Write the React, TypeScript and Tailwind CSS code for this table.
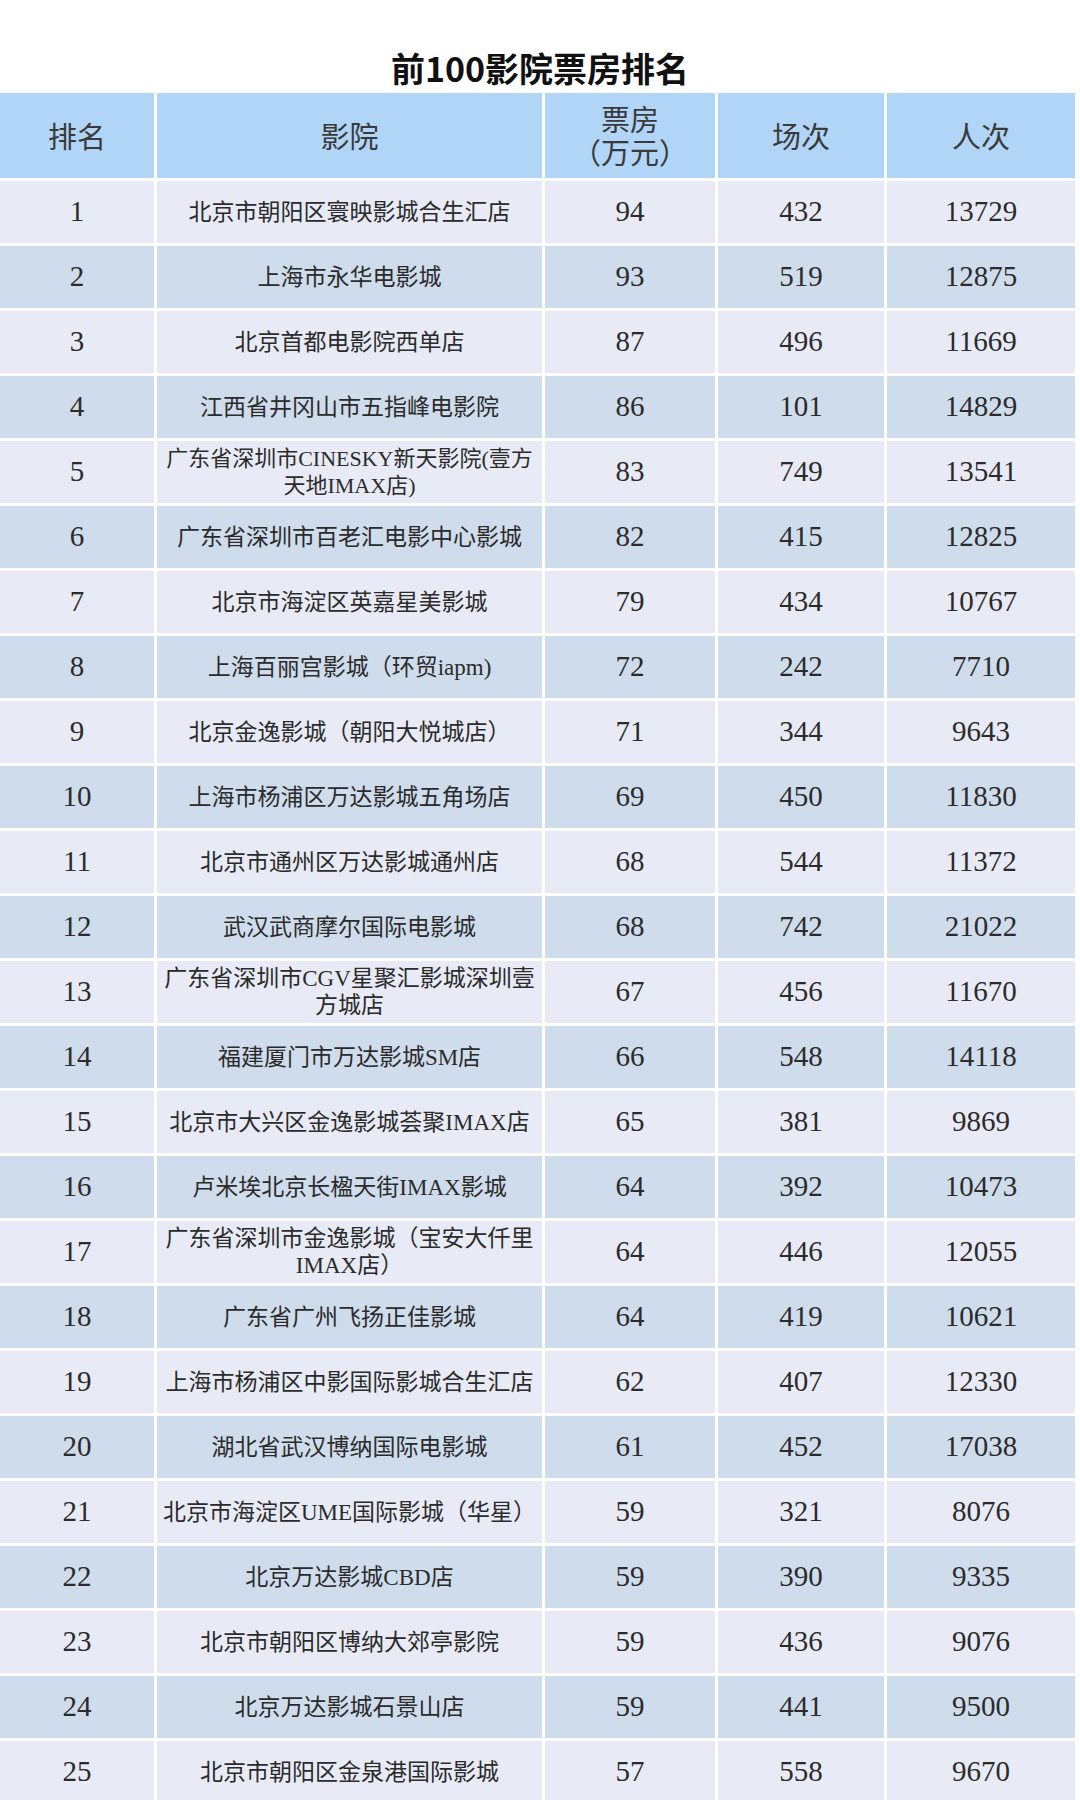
import React from "react";

type Row = {
  rank: number;
  name: React.ReactNode;
  box: number;
  shows: number;
  people: number;
};

const rows: Row[] = [
  { rank: 1, name: "北京市朝阳区寰映影城合生汇店", box: 94, shows: 432, people: 13729 },
  { rank: 2, name: "上海市永华电影城", box: 93, shows: 519, people: 12875 },
  { rank: 3, name: "北京首都电影院西单店", box: 87, shows: 496, people: 11669 },
  { rank: 4, name: "江西省井冈山市五指峰电影院", box: 86, shows: 101, people: 14829 },
  {
    rank: 5,
    name: (
      <>
        广东省深圳市CINESKY新天影院(壹方
        <br />
        天地IMAX店)
      </>
    ),
    box: 83,
    shows: 749,
    people: 13541,
  },
  { rank: 6, name: "广东省深圳市百老汇电影中心影城", box: 82, shows: 415, people: 12825 },
  { rank: 7, name: "北京市海淀区英嘉星美影城", box: 79, shows: 434, people: 10767 },
  { rank: 8, name: "上海百丽宫影城（环贸iapm)", box: 72, shows: 242, people: 7710 },
  { rank: 9, name: "北京金逸影城（朝阳大悦城店）", box: 71, shows: 344, people: 9643 },
  { rank: 10, name: "上海市杨浦区万达影城五角场店", box: 69, shows: 450, people: 11830 },
  { rank: 11, name: "北京市通州区万达影城通州店", box: 68, shows: 544, people: 11372 },
  { rank: 12, name: "武汉武商摩尔国际电影城", box: 68, shows: 742, people: 21022 },
  {
    rank: 13,
    name: (
      <>
        广东省深圳市CGV星聚汇影城深圳壹
        <br />
        方城店
      </>
    ),
    box: 67,
    shows: 456,
    people: 11670,
  },
  { rank: 14, name: "福建厦门市万达影城SM店", box: 66, shows: 548, people: 14118 },
  { rank: 15, name: "北京市大兴区金逸影城荟聚IMAX店", box: 65, shows: 381, people: 9869 },
  { rank: 16, name: "卢米埃北京长楹天街IMAX影城", box: 64, shows: 392, people: 10473 },
  {
    rank: 17,
    name: (
      <>
        广东省深圳市金逸影城（宝安大仟里
        <br />
        IMAX店）
      </>
    ),
    box: 64,
    shows: 446,
    people: 12055,
  },
  { rank: 18, name: "广东省广州飞扬正佳影城", box: 64, shows: 419, people: 10621 },
  { rank: 19, name: "上海市杨浦区中影国际影城合生汇店", box: 62, shows: 407, people: 12330 },
  { rank: 20, name: "湖北省武汉博纳国际电影城", box: 61, shows: 452, people: 17038 },
  { rank: 21, name: "北京市海淀区UME国际影城（华星）", box: 59, shows: 321, people: 8076 },
  { rank: 22, name: "北京万达影城CBD店", box: 59, shows: 390, people: 9335 },
  { rank: 23, name: "北京市朝阳区博纳大郊亭影院", box: 59, shows: 436, people: 9076 },
  { rank: 24, name: "北京万达影城石景山店", box: 59, shows: 441, people: 9500 },
  { rank: 25, name: "北京市朝阳区金泉港国际影城", box: 57, shows: 558, people: 9670 },
];

const serif = "font-['Liberation_Serif','Noto_Sans_CJK_SC',serif]";

function HeadCell({ children }: { children: React.ReactNode }) {
  return (
    <div
      className={`flex h-[85px] items-center justify-center bg-[#b1d5f6] pt-[5px] text-center text-[29px] leading-[33px] text-[#3a3a3a] ${serif}`}
    >
      {children}
    </div>
  );
}

function Cell({
  children,
  even,
  small,
}: {
  children: React.ReactNode;
  even: boolean;
  small?: boolean;
}) {
  return (
    <div
      className={`flex h-[62px] items-center justify-center text-center text-[#2b2b2b] ${serif} ${
        even ? "bg-[#cfdcec]" : "bg-[#e8ebf5]"
      } ${small ? "whitespace-nowrap text-[23px] leading-[27px]" : "text-[29px]"}`}
    >
      {children}
    </div>
  );
}

export default function App() {
  return (
    <div className="min-h-[1800px] w-[1080px] overflow-hidden bg-white">
      {/* Title */}
      <div className="h-[93px] pt-[46px] text-center font-['Noto_Sans_CJK_SC',sans-serif] text-[34px] font-bold leading-[44px] text-[#111]">
        前100影院票房排名
      </div>

      {/* Table */}
      <div className="grid grid-cols-[154px_385px_170px_166px_188px] gap-[3px]">
        <HeadCell>排名</HeadCell>
        <HeadCell>影院</HeadCell>
        <HeadCell>
          <span>
            票房
            <br />
            （万元）
          </span>
        </HeadCell>
        <HeadCell>场次</HeadCell>
        <HeadCell>人次</HeadCell>

        {rows.map((r) => {
          const even = r.rank % 2 === 0;
          return (
            <React.Fragment key={r.rank}>
              <Cell even={even}>{r.rank}</Cell>
              <Cell even={even} small>
                <span className={r.rank === 5 ? "text-[22px]" : ""}>{r.name}</span>
              </Cell>
              <Cell even={even}>{r.box}</Cell>
              <Cell even={even}>{r.shows}</Cell>
              <Cell even={even}>{r.people}</Cell>
            </React.Fragment>
          );
        })}
      </div>
    </div>
  );
}
